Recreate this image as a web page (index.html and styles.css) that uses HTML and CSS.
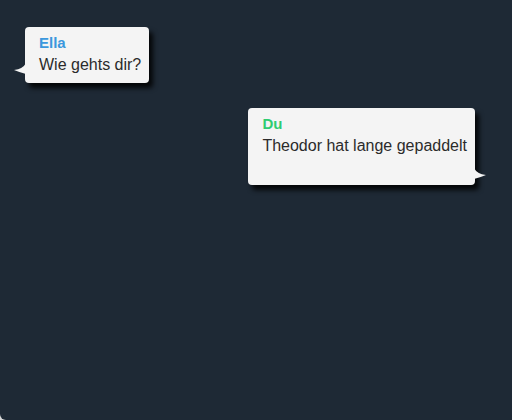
FILE: index.html
```html
<!DOCTYPE html>
<html lang="de">
<head>
<meta charset="utf-8">
<title>Chat</title>
<link rel="stylesheet" href="styles.css">
</head>
<body>
<div class="chat">
  <div class="bubble other">
    <div class="name">Ella</div>
    <div class="text">Wie gehts dir?</div>
    <svg class="tail" width="12" height="11" viewBox="0 0 12 11"><path d="M12 0 Q9 6 0 7 Q6 9.5 12 11 Z" fill="#f4f4f4"/></svg>
  </div>
  <div class="bubble self">
    <div class="name">Du</div>
    <div class="text">Theodor hat lange gepaddelt</div>
    <svg class="tail" width="12" height="11" viewBox="0 0 12 11"><path d="M0 0 Q3 6 12 7 Q6 9.5 0 11 Z" fill="#f4f4f4"/></svg>
  </div>
</div>
</body>
</html>
```
FILE: styles.css
```css
html, body {
  margin: 0;
  padding: 0;
  background: #d8d8d8;
}
.chat {
  box-sizing: border-box;
  width: 512px;
  height: 420px;
  background: #1e2935;
  border-bottom-left-radius: 6px;
  padding: 27px 37px 0 25px;
  display: flex;
  flex-direction: column;
  gap: 25px;
  font-family: "Liberation Sans", Arial, sans-serif;
}
.bubble {
  position: relative;
  background: #f4f4f4;
  border-radius: 4px;
  padding: 6px 8px 6px 14px;
  box-shadow: 4px 5px 5px rgba(0, 0, 0, 0.85);
  color: #2b2b2b;
}
.bubble.other {
  align-self: flex-start;
}
.bubble.self {
  align-self: flex-end;
  padding-bottom: 27px;
}
.name {
  font-size: 15px;
  font-weight: bold;
  line-height: 20px;
}
.other .name { color: #3b98dd; }
.self .name { color: #2ecc71; }
.text {
  font-size: 16px;
  line-height: 24px;
}
.tail {
  position: absolute;
  display: block;
}
.other .tail {
  left: -11px;
  bottom: 9px;
}
.self .tail {
  right: -11px;
  bottom: 6px;
}
```
